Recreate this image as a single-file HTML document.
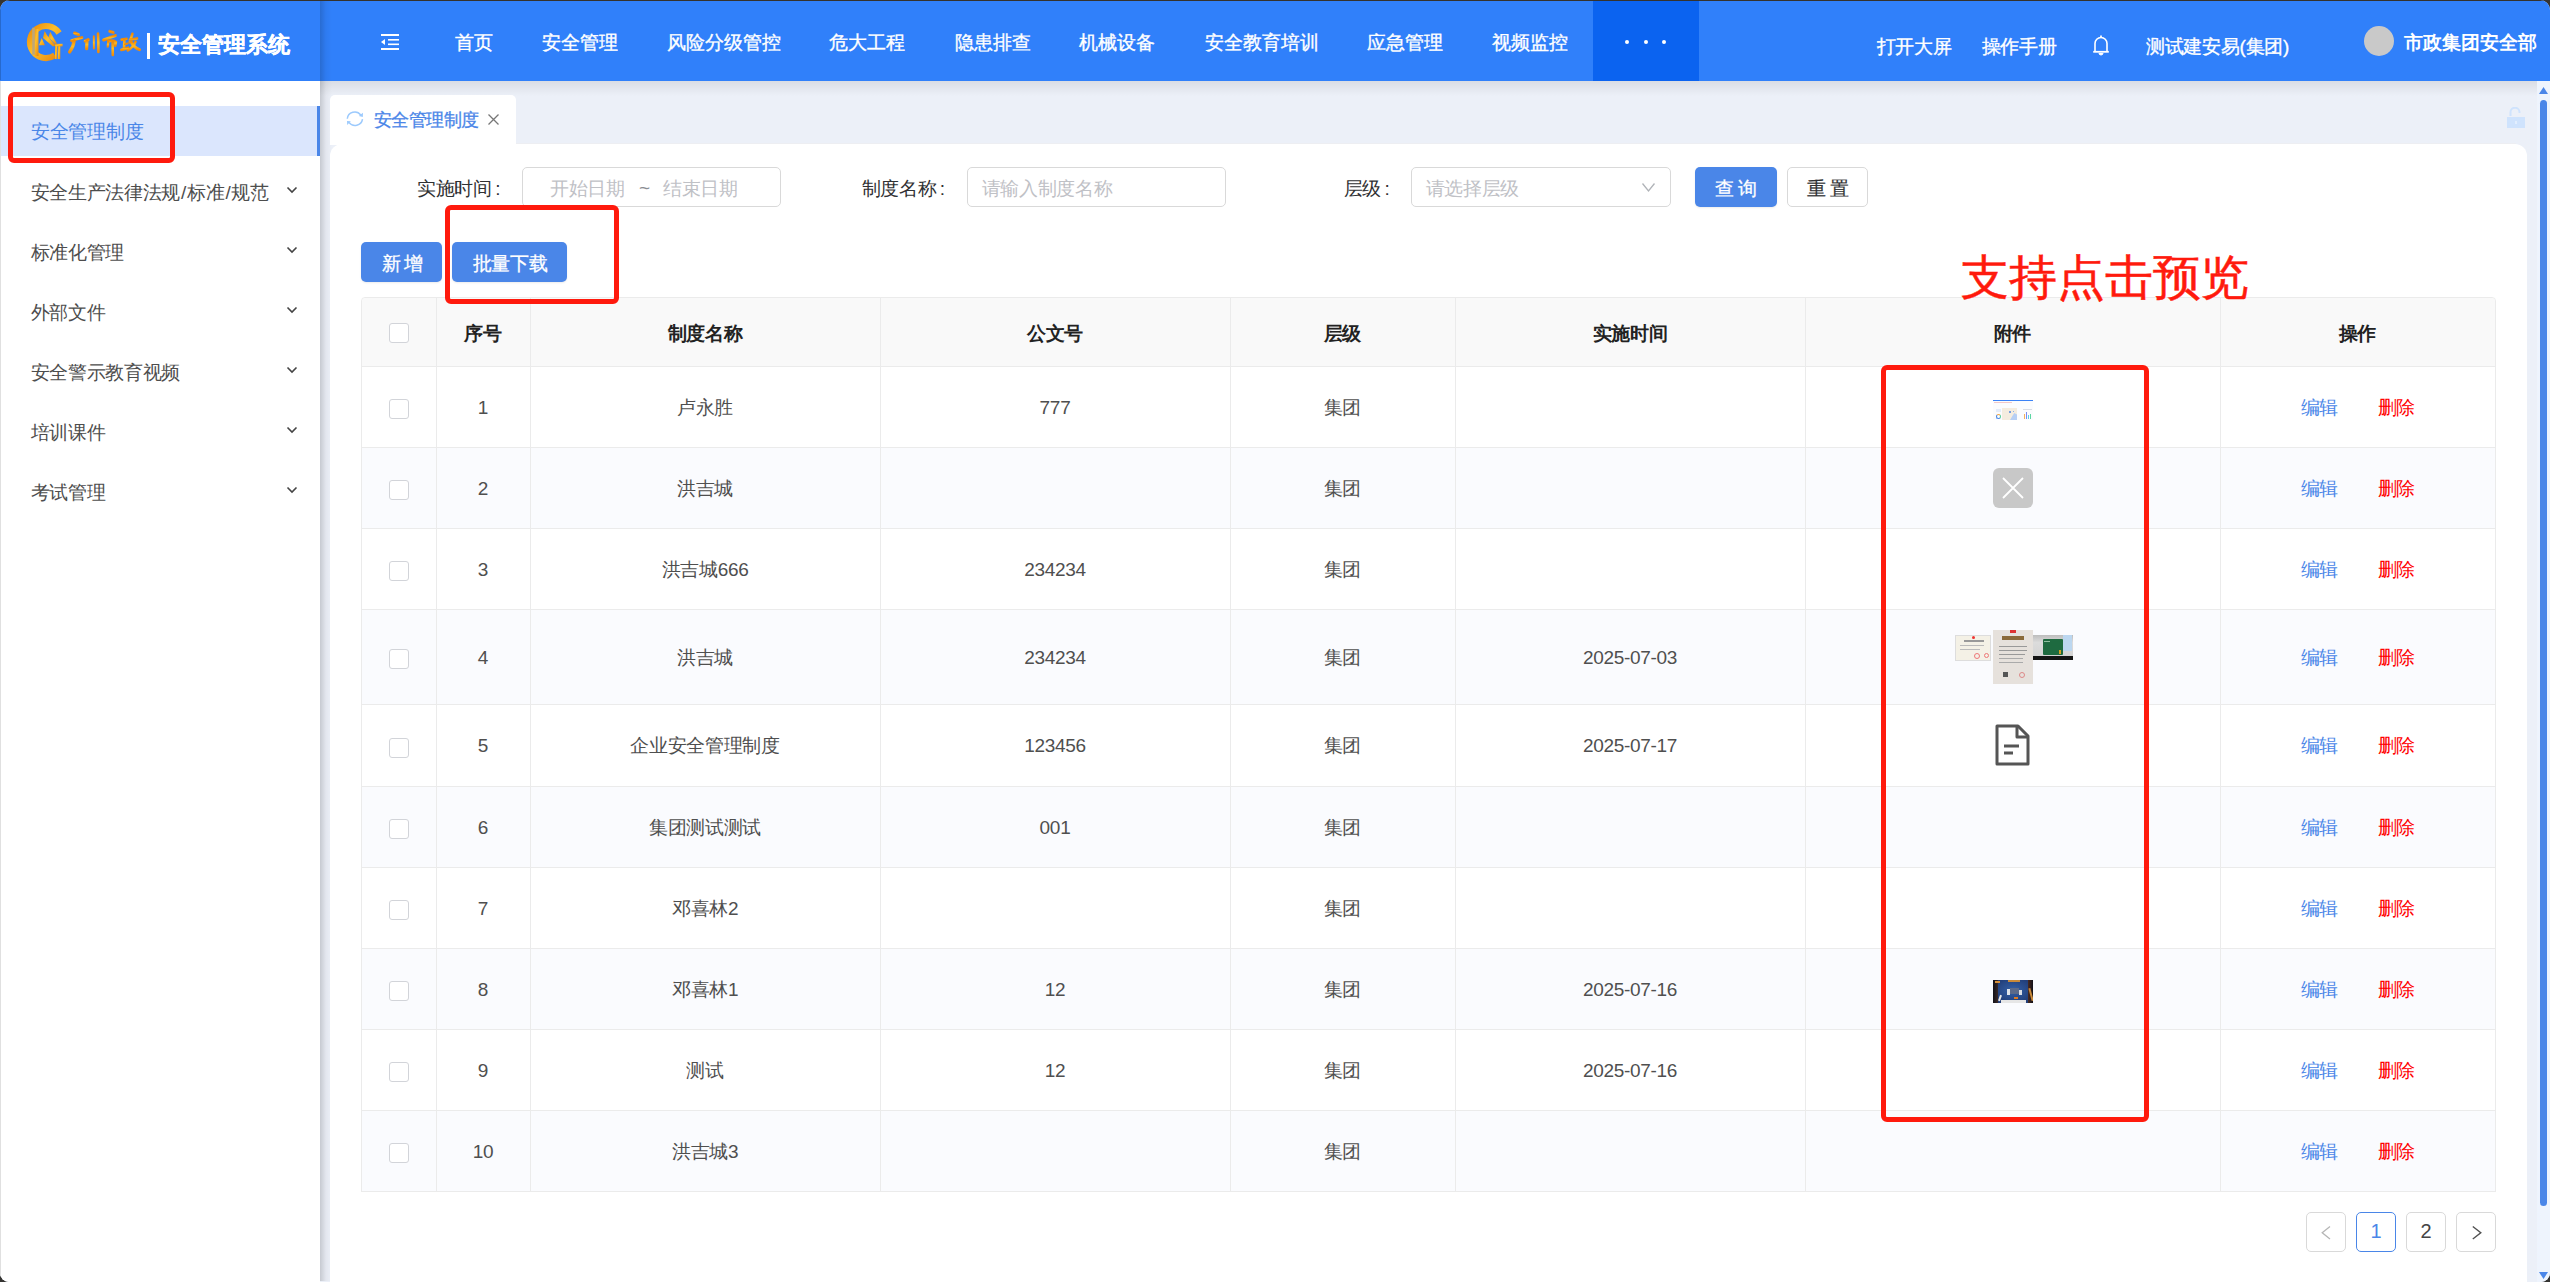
<!DOCTYPE html><html><head><meta charset="utf-8"><style>
*{box-sizing:border-box;margin:0;padding:0}
html,body{width:2550px;height:1282px;overflow:hidden;background:#353432;font-family:"Liberation Sans",sans-serif}
#app{position:absolute;left:0;top:0;width:2550px;height:1282px;border-radius:10px 10px 9px 9px;overflow:hidden;background:#ecf0f8}
.a{position:absolute}
.t{position:absolute;font-size:19px;line-height:28px;white-space:nowrap}
.w{color:#fff}
.hdr{position:absolute;left:0;top:0;width:2550px;height:81px;background:#3080fa}
.side{position:absolute;left:0;top:81px;width:320px;height:1201px;background:#fff}
.inp{position:absolute;top:167px;height:40px;border:1px solid #d9d9d9;border-radius:5px;background:#fff}
.ph{color:#bfc1c6;font-size:19px;letter-spacing:-0.3px}
.btn{position:absolute;height:40px;border-radius:5px;background:#4a86e8;box-shadow:0 1px 2px rgba(0,0,0,.08)}
.redbox{position:absolute;border:5px solid #ff1a0d;border-radius:6px}
.vl{position:absolute;top:297px;width:1px;height:894px;background:#ebebeb}
.hl{position:absolute;left:361px;width:2135px;height:1px;background:#ebebeb}
.cb{position:absolute;left:389px;width:20px;height:20px;border:1px solid #d2d4d9;border-radius:3px;background:#fff}
.c{text-align:center;color:#4f4f4f;font-size:19px;letter-spacing:-0.3px}
.pg{position:absolute;top:1212px;width:40px;height:40px;border:1px solid #d9d9d9;border-radius:5px;background:#fff}
</style></head><body><div id="app">
<div class="hdr">
<svg class="a" style="left:24px;top:18px" width="50" height="48" viewBox="0 0 50 48">
<defs><linearGradient id="gd" x1="0" y1="0" x2="1" y2="1"><stop offset="0" stop-color="#e98a0c"/><stop offset=".45" stop-color="#fdbf2a"/><stop offset="1" stop-color="#e9860e"/></linearGradient></defs>
<path d="M35.1 14.9 A16 16 0 1 0 30.9 37.3" fill="none" stroke="url(#gd)" stroke-width="6.2"/>
<rect x="9.5" y="11" width="5" height="27" fill="url(#gd)"/>
<rect x="8.2" y="9.7" width="2.6" height="27" fill="#bda77a"/>
<path d="M15 27.2 L17.6 20 L21 27.2 Z" fill="url(#gd)"/>
<path d="M19 20 L20.6 13 L23.2 17.5 L31.5 27.5 L29 28.5 Z" fill="url(#gd)"/>
<path d="M24.5 19 L26.2 13.8 L28.8 18.5 L33 25.5 L31 26 Z" fill="url(#gd)"/>
<rect x="31" y="26" width="2.2" height="15" fill="url(#gd)"/>
<rect x="33.8" y="26" width="2.5" height="15" fill="url(#gd)"/>
<rect x="31" y="25.8" width="7.6" height="2.6" fill="url(#gd)"/>
</svg>
<svg class="a" style="left:62px;top:24px" width="84" height="38" viewBox="0 0 84 38">
<defs><linearGradient id="gc" x1="0" y1="0" x2="0" y2="1"><stop offset="0" stop-color="#f18a06"/><stop offset=".5" stop-color="#fdbb22"/><stop offset="1" stop-color="#f08c0a"/></linearGradient></defs>
<g fill="none" stroke="url(#gc)" stroke-linecap="round" stroke-linejoin="round">
<path d="M12.6 9 L16.5 10.6" stroke-width="3"/>
<path d="M9.6 16.6 Q14 15 19.8 13.6" stroke-width="3"/>
<path d="M12.2 16.8 Q11.4 23 7.6 28" stroke-width="3.2"/>
<path d="M23.2 17 L26.2 15.6" stroke-width="3"/>
<path d="M25 16.5 L24.6 24.6" stroke-width="3.2"/>
<path d="M31.8 12.2 L31.9 24.6" stroke-width="2"/>
<path d="M36 9.5 Q36.6 20 36.4 28" stroke-width="2.6"/>
<path d="M47.8 7.4 L51.2 8.4" stroke-width="3"/>
<path d="M41.6 16 Q47 13.8 53.4 11.6" stroke-width="3"/>
<path d="M46.4 17.2 Q51.5 15.8 53.8 18 L53.2 21.5" stroke-width="2.8"/>
<path d="M50.6 18 L50.8 31" stroke-width="2.6"/>
<path d="M46.2 18 L45.8 22.5" stroke-width="2.4"/>
<path d="M59.6 15.6 L64.6 14.8" stroke-width="2.6"/>
<path d="M62.4 15.4 L62 25.2" stroke-width="2.6"/>
<path d="M59.4 25.8 L66 23.8" stroke-width="2.8"/>
<path d="M62.8 20.2 L65.6 19.6" stroke-width="2"/>
<path d="M70.4 9.8 L67.6 18.4" stroke-width="2.6"/>
<path d="M68 15.8 L75 14.4" stroke-width="2.6"/>
<path d="M69.2 18 Q72.4 24 77.6 25.6" stroke-width="3"/>
<path d="M73.6 17.6 Q71.6 23 65.8 26.4" stroke-width="2.6"/>
</g></svg>
<div class="a" style="left:147px;top:33px;width:3px;height:26px;background:#fff"></div>
<div class="t w" style="left:157.5px;top:30.5px;font-size:22px;font-weight:bold;letter-spacing:0.2px;-webkit-text-stroke:0.3px #fff">安全管理系统</div>
<svg class="a" style="left:380px;top:33px" width="20" height="18" viewBox="0 0 20 18">
<rect x="1" y="1" width="18" height="2" fill="#fff"/>
<rect x="8" y="6" width="11" height="1.6" fill="#fff"/>
<rect x="8" y="10.5" width="11" height="1.6" fill="#fff"/>
<rect x="1" y="15" width="18" height="2" fill="#fff"/>
<path d="M5 6 L1 9 L5 12 Z" fill="#fff"/>
</svg>
<div class="t w" style="left:455px;top:28.5px;-webkit-text-stroke:0.35px #fff">首页</div>
<div class="t w" style="left:542px;top:28.5px;-webkit-text-stroke:0.35px #fff">安全管理</div>
<div class="t w" style="left:667px;top:28.5px;-webkit-text-stroke:0.35px #fff">风险分级管控</div>
<div class="t w" style="left:829px;top:28.5px;-webkit-text-stroke:0.35px #fff">危大工程</div>
<div class="t w" style="left:955px;top:28.5px;-webkit-text-stroke:0.35px #fff">隐患排查</div>
<div class="t w" style="left:1079px;top:28.5px;-webkit-text-stroke:0.35px #fff">机械设备</div>
<div class="t w" style="left:1204.5px;top:28.5px;-webkit-text-stroke:0.35px #fff">安全教育培训</div>
<div class="t w" style="left:1367px;top:28.5px;-webkit-text-stroke:0.35px #fff">应急管理</div>
<div class="t w" style="left:1492px;top:28.5px;-webkit-text-stroke:0.35px #fff">视频监控</div>
<div class="a" style="left:1593px;top:0;width:106px;height:81px;background:#0b63f0"></div>
<div class="a" style="left:1624.8px;top:39.6px;width:4.4px;height:4.4px;border-radius:50%;background:#fff"></div>
<div class="a" style="left:1643.8px;top:39.6px;width:4.4px;height:4.4px;border-radius:50%;background:#fff"></div>
<div class="a" style="left:1661.8px;top:39.6px;width:4.4px;height:4.4px;border-radius:50%;background:#fff"></div>
<div class="t w" style="left:1876.5px;top:33px;letter-spacing:-0.3px;-webkit-text-stroke:0.35px #fff">打开大屏</div>
<div class="t w" style="left:1981.5px;top:33px;letter-spacing:-0.3px;-webkit-text-stroke:0.35px #fff">操作手册</div>
<div class="t w" style="left:2146px;top:33px;letter-spacing:-0.3px;-webkit-text-stroke:0.35px #fff">测试建安易(集团)</div>
<svg class="a" style="left:2092px;top:34px" width="18" height="22" viewBox="0 0 18 22">
<path d="M3 17 V9.5 A6 6 0 0 1 15 9.5 V17" fill="none" stroke="#fff" stroke-width="1.6"/>
<path d="M1.2 17.8 H16.8" stroke="#fff" stroke-width="1.8"/>
<path d="M9 1.5 V3.5" stroke="#fff" stroke-width="1.8"/>
<path d="M7 19 A2 2 0 0 0 11 19" fill="#fff" stroke="#fff" stroke-width="1"/>
</svg>
<div class="a" style="left:2364px;top:26px;width:30px;height:30px;border-radius:50%;background:#c9c9c9"></div>
<div class="t w" style="left:2403.5px;top:29px;font-size:18.5px;font-weight:bold">市政集团安全部</div>
<div class="a" style="left:0;top:0;width:1px;height:80px;background:rgba(0,0,0,.18)"></div>
</div>
<div class="side">
<div class="a" style="left:0;top:0;width:1px;height:1201px;background:#e0e0e0"></div>
<div class="a" style="left:1px;top:25px;width:319px;height:50px;background:#dbe6fd"></div>
<div class="a" style="left:317px;top:25px;width:3px;height:50px;background:#4a86e8"></div>
<div class="t" style="left:31px;top:37px;font-size:19px;letter-spacing:-0.3px;color:#4a86e8">安全管理制度</div>
<div class="t" style="left:30.5px;top:97.5px;font-size:19px;letter-spacing:-0.3px;color:#4d4d4d">安全生产法律法规<span style="margin:0 1px">/</span>标准<span style="margin:0 1px">/</span>规范</div>
<svg class="a" style="left:286px;top:105.0px" width="12" height="8" viewBox="0 0 12 8"><path d="M1.5 1.5 L6 6 L10.5 1.5" fill="none" stroke="#444" stroke-width="1.6"/></svg>
<div class="t" style="left:30.5px;top:157.5px;font-size:19px;letter-spacing:-0.3px;color:#4d4d4d">标准化管理</div>
<svg class="a" style="left:286px;top:165.0px" width="12" height="8" viewBox="0 0 12 8"><path d="M1.5 1.5 L6 6 L10.5 1.5" fill="none" stroke="#444" stroke-width="1.6"/></svg>
<div class="t" style="left:30.5px;top:217.5px;font-size:19px;letter-spacing:-0.3px;color:#4d4d4d">外部文件</div>
<svg class="a" style="left:286px;top:225.0px" width="12" height="8" viewBox="0 0 12 8"><path d="M1.5 1.5 L6 6 L10.5 1.5" fill="none" stroke="#444" stroke-width="1.6"/></svg>
<div class="t" style="left:30.5px;top:277.5px;font-size:19px;letter-spacing:-0.3px;color:#4d4d4d">安全警示教育视频</div>
<svg class="a" style="left:286px;top:285.0px" width="12" height="8" viewBox="0 0 12 8"><path d="M1.5 1.5 L6 6 L10.5 1.5" fill="none" stroke="#444" stroke-width="1.6"/></svg>
<div class="t" style="left:30.5px;top:337.5px;font-size:19px;letter-spacing:-0.3px;color:#4d4d4d">培训课件</div>
<svg class="a" style="left:286px;top:345.0px" width="12" height="8" viewBox="0 0 12 8"><path d="M1.5 1.5 L6 6 L10.5 1.5" fill="none" stroke="#444" stroke-width="1.6"/></svg>
<div class="t" style="left:30.5px;top:397.5px;font-size:19px;letter-spacing:-0.3px;color:#4d4d4d">考试管理</div>
<svg class="a" style="left:286px;top:405.0px" width="12" height="8" viewBox="0 0 12 8"><path d="M1.5 1.5 L6 6 L10.5 1.5" fill="none" stroke="#444" stroke-width="1.6"/></svg>
</div>
<div class="a" style="left:320px;top:0;width:12px;height:1281px;background:linear-gradient(to right,rgba(0,0,0,.16),rgba(0,0,0,.04) 50%,rgba(0,0,0,0))"></div>
<div class="a" style="left:320px;top:81px;width:2230px;height:15px;background:linear-gradient(to bottom,rgba(0,0,0,.08),rgba(0,0,0,0))"></div>
<div class="a" style="left:330px;top:95px;width:186px;height:50px;background:#fff;border-radius:5px 5px 0 0"></div>
<svg class="a" style="left:342px;top:106px" width="26" height="26" viewBox="0 0 26 26">
<path d="M5.3 12.8 A7.5 7.5 0 0 1 18.8 9" fill="none" stroke="#9ccafd" stroke-width="1.5"/>
<path d="M21 6.8 L20.8 11 L16.8 10 Z" fill="#9ccafd"/>
<path d="M20.5 13.2 A7.5 7.5 0 0 1 7 16.4" fill="none" stroke="#9ccafd" stroke-width="1.5"/>
<path d="M5 15 L8.8 15.2 L5.2 19 Z" fill="#9ccafd"/>
</svg>
<div class="t" style="left:373.5px;top:106px;font-size:18px;letter-spacing:-0.45px;-webkit-text-stroke:0.3px #4a86e8;color:#4a86e8">安全管理制度</div>
<svg class="a" style="left:487px;top:113px" width="13" height="13" viewBox="0 0 13 13"><path d="M1.5 1.5 L11.5 11.5 M11.5 1.5 L1.5 11.5" stroke="#777" stroke-width="1.3"/></svg>
<svg class="a" style="left:2506px;top:107px" width="20" height="22" viewBox="0 0 20 22">
<path d="M4.5 9 V5.5 A4.5 4.5 0 0 1 13.5 5 V6" fill="none" stroke="#cfe3fd" stroke-width="2"/>
<rect x="1" y="10" width="18" height="11" fill="#cfe3fd"/>
<rect x="9.3" y="14" width="1.4" height="3" fill="#eaf2fe"/>
</svg>
<div class="a" style="left:330px;top:144px;width:2197px;height:1140px;background:#fff;border-radius:12px 12px 0 0"></div>
<div class="a" style="left:516px;top:143px;width:2000px;height:1px;background:#edeef2"></div>
<div class="t" style="left:417px;top:174.5px;font-size:19px;letter-spacing:-0.3px;color:#303133">实施时间<span style="margin-left:3.5px">:</span></div>
<div class="inp" style="left:522px;width:259px"></div>
<div class="t ph" style="left:550px;top:174.5px">开始日期</div>
<div class="t ph" style="left:639px;top:174px;color:#8a8d92">~</div>
<div class="t ph" style="left:663px;top:174.5px">结束日期</div>
<div class="t" style="left:861.5px;top:174.5px;font-size:19px;letter-spacing:-0.3px;color:#303133">制度名称<span style="margin-left:3.5px">:</span></div>
<div class="inp" style="left:967px;width:259px"></div>
<div class="t ph" style="left:981.5px;top:174.5px">请输入制度名称</div>
<div class="t" style="left:1343.5px;top:174.5px;font-size:19px;letter-spacing:-0.3px;color:#303133">层级<span style="margin-left:3.5px">:</span></div>
<div class="inp" style="left:1411px;width:260px"></div>
<div class="t ph" style="left:1425.5px;top:174.5px">请选择层级</div>
<svg class="a" style="left:1641px;top:181px" width="15" height="13" viewBox="0 0 15 13"><path d="M1.5 2.5 L7.5 10 L13.5 2.5" fill="none" stroke="#b0b3b8" stroke-width="1.3"/></svg>
<div class="btn" style="left:1695px;top:167px;width:82px"></div>
<div class="t w" style="left:1715px;top:174.5px;letter-spacing:3.5px;-webkit-text-stroke:0.3px #fff">查询</div>
<div class="a" style="left:1787px;top:167px;width:81px;height:40px;border:1px solid #d9d9d9;border-radius:5px;background:#fff"></div>
<div class="t" style="left:1807px;top:174.5px;letter-spacing:3.5px;color:#303133;-webkit-text-stroke:0.2px #303133">重置</div>
<div class="btn" style="left:361px;top:242px;width:81px"></div>
<div class="t w" style="left:381.5px;top:249.5px;letter-spacing:3.5px;-webkit-text-stroke:0.3px #fff">新增</div>
<div class="btn" style="left:452px;top:242px;width:115px"></div>
<div class="t w" style="left:472.5px;top:249.5px;letter-spacing:-0.3px;-webkit-text-stroke:0.3px #fff">批量下载</div>
<div class="a" style="left:361px;top:297px;width:2135px;height:895px;border:1px solid #ebebeb;border-radius:4px 4px 0 0;overflow:hidden;background:#fff"></div>
<div class="a" style="left:362px;top:298px;width:2133px;height:68px;background:#f9f9f9;border-radius:4px 4px 0 0"></div>
<div class="a" style="left:362px;top:448px;width:2133px;height:80px;background:#fafbfe"></div>
<div class="a" style="left:362px;top:610px;width:2133px;height:94px;background:#fafbfe"></div>
<div class="a" style="left:362px;top:787px;width:2133px;height:80px;background:#fafbfe"></div>
<div class="a" style="left:362px;top:949px;width:2133px;height:80px;background:#fafbfe"></div>
<div class="a" style="left:362px;top:1111px;width:2133px;height:80px;background:#fafbfe"></div>
<div class="hl" style="top:366px"></div>
<div class="hl" style="top:447px"></div>
<div class="hl" style="top:528px"></div>
<div class="hl" style="top:609px"></div>
<div class="hl" style="top:704px"></div>
<div class="hl" style="top:786px"></div>
<div class="hl" style="top:867px"></div>
<div class="hl" style="top:948px"></div>
<div class="hl" style="top:1029px"></div>
<div class="hl" style="top:1110px"></div>
<div class="hl" style="top:1191px"></div>
<div class="vl" style="left:436px"></div>
<div class="vl" style="left:530px"></div>
<div class="vl" style="left:880px"></div>
<div class="vl" style="left:1230px"></div>
<div class="vl" style="left:1455px"></div>
<div class="vl" style="left:1805px"></div>
<div class="vl" style="left:2220px"></div>
<div class="t" style="left:436px;width:94px;top:319.5px;text-align:center;font-weight:bold;font-size:19px;letter-spacing:-0.3px;color:#222">序号</div>
<div class="t" style="left:530px;width:350px;top:319.5px;text-align:center;font-weight:bold;font-size:19px;letter-spacing:-0.3px;color:#222">制度名称</div>
<div class="t" style="left:880px;width:350px;top:319.5px;text-align:center;font-weight:bold;font-size:19px;letter-spacing:-0.3px;color:#222">公文号</div>
<div class="t" style="left:1230px;width:225px;top:319.5px;text-align:center;font-weight:bold;font-size:19px;letter-spacing:-0.3px;color:#222">层级</div>
<div class="t" style="left:1455px;width:350px;top:319.5px;text-align:center;font-weight:bold;font-size:19px;letter-spacing:-0.3px;color:#222">实施时间</div>
<div class="t" style="left:1805px;width:415px;top:319.5px;text-align:center;font-weight:bold;font-size:19px;letter-spacing:-0.3px;color:#222">附件</div>
<div class="t" style="left:2220px;width:275px;top:319.5px;text-align:center;font-weight:bold;font-size:19px;letter-spacing:-0.3px;color:#222">操作</div>
<div class="cb" style="top:323px"></div>
<div class="cb" style="top:399.0px"></div>
<div class="t c" style="left:436px;width:94px;top:393.5px">1</div>
<div class="t c" style="left:530px;width:350px;top:393.5px">卢永胜</div>
<div class="t c" style="left:880px;width:350px;top:393.5px">777</div>
<div class="t c" style="left:1230px;width:225px;top:393.5px">集团</div>
<div class="t" style="left:2300.5px;top:393.5px;color:#4a86e8;letter-spacing:-0.3px">编辑</div>
<div class="t" style="left:2377.5px;top:393.5px;color:#ff0000;letter-spacing:-0.3px">删除</div>
<div class="cb" style="top:480.0px"></div>
<div class="t c" style="left:436px;width:94px;top:474.5px">2</div>
<div class="t c" style="left:530px;width:350px;top:474.5px">洪吉城</div>
<div class="t c" style="left:1230px;width:225px;top:474.5px">集团</div>
<div class="t" style="left:2300.5px;top:474.5px;color:#4a86e8;letter-spacing:-0.3px">编辑</div>
<div class="t" style="left:2377.5px;top:474.5px;color:#ff0000;letter-spacing:-0.3px">删除</div>
<div class="cb" style="top:561.0px"></div>
<div class="t c" style="left:436px;width:94px;top:555.5px">3</div>
<div class="t c" style="left:530px;width:350px;top:555.5px">洪吉城666</div>
<div class="t c" style="left:880px;width:350px;top:555.5px">234234</div>
<div class="t c" style="left:1230px;width:225px;top:555.5px">集团</div>
<div class="t" style="left:2300.5px;top:555.5px;color:#4a86e8;letter-spacing:-0.3px">编辑</div>
<div class="t" style="left:2377.5px;top:555.5px;color:#ff0000;letter-spacing:-0.3px">删除</div>
<div class="cb" style="top:649.0px"></div>
<div class="t c" style="left:436px;width:94px;top:643.5px">4</div>
<div class="t c" style="left:530px;width:350px;top:643.5px">洪吉城</div>
<div class="t c" style="left:880px;width:350px;top:643.5px">234234</div>
<div class="t c" style="left:1230px;width:225px;top:643.5px">集团</div>
<div class="t c" style="left:1455px;width:350px;top:643.5px">2025-07-03</div>
<div class="t" style="left:2300.5px;top:643.5px;color:#4a86e8;letter-spacing:-0.3px">编辑</div>
<div class="t" style="left:2377.5px;top:643.5px;color:#ff0000;letter-spacing:-0.3px">删除</div>
<div class="cb" style="top:737.5px"></div>
<div class="t c" style="left:436px;width:94px;top:732.0px">5</div>
<div class="t c" style="left:530px;width:350px;top:732.0px">企业安全管理制度</div>
<div class="t c" style="left:880px;width:350px;top:732.0px">123456</div>
<div class="t c" style="left:1230px;width:225px;top:732.0px">集团</div>
<div class="t c" style="left:1455px;width:350px;top:732.0px">2025-07-17</div>
<div class="t" style="left:2300.5px;top:732.0px;color:#4a86e8;letter-spacing:-0.3px">编辑</div>
<div class="t" style="left:2377.5px;top:732.0px;color:#ff0000;letter-spacing:-0.3px">删除</div>
<div class="cb" style="top:819.0px"></div>
<div class="t c" style="left:436px;width:94px;top:813.5px">6</div>
<div class="t c" style="left:530px;width:350px;top:813.5px">集团测试测试</div>
<div class="t c" style="left:880px;width:350px;top:813.5px">001</div>
<div class="t c" style="left:1230px;width:225px;top:813.5px">集团</div>
<div class="t" style="left:2300.5px;top:813.5px;color:#4a86e8;letter-spacing:-0.3px">编辑</div>
<div class="t" style="left:2377.5px;top:813.5px;color:#ff0000;letter-spacing:-0.3px">删除</div>
<div class="cb" style="top:900.0px"></div>
<div class="t c" style="left:436px;width:94px;top:894.5px">7</div>
<div class="t c" style="left:530px;width:350px;top:894.5px">邓喜林2</div>
<div class="t c" style="left:1230px;width:225px;top:894.5px">集团</div>
<div class="t" style="left:2300.5px;top:894.5px;color:#4a86e8;letter-spacing:-0.3px">编辑</div>
<div class="t" style="left:2377.5px;top:894.5px;color:#ff0000;letter-spacing:-0.3px">删除</div>
<div class="cb" style="top:981.0px"></div>
<div class="t c" style="left:436px;width:94px;top:975.5px">8</div>
<div class="t c" style="left:530px;width:350px;top:975.5px">邓喜林1</div>
<div class="t c" style="left:880px;width:350px;top:975.5px">12</div>
<div class="t c" style="left:1230px;width:225px;top:975.5px">集团</div>
<div class="t c" style="left:1455px;width:350px;top:975.5px">2025-07-16</div>
<div class="t" style="left:2300.5px;top:975.5px;color:#4a86e8;letter-spacing:-0.3px">编辑</div>
<div class="t" style="left:2377.5px;top:975.5px;color:#ff0000;letter-spacing:-0.3px">删除</div>
<div class="cb" style="top:1062.0px"></div>
<div class="t c" style="left:436px;width:94px;top:1056.5px">9</div>
<div class="t c" style="left:530px;width:350px;top:1056.5px">测试</div>
<div class="t c" style="left:880px;width:350px;top:1056.5px">12</div>
<div class="t c" style="left:1230px;width:225px;top:1056.5px">集团</div>
<div class="t c" style="left:1455px;width:350px;top:1056.5px">2025-07-16</div>
<div class="t" style="left:2300.5px;top:1056.5px;color:#4a86e8;letter-spacing:-0.3px">编辑</div>
<div class="t" style="left:2377.5px;top:1056.5px;color:#ff0000;letter-spacing:-0.3px">删除</div>
<div class="cb" style="top:1143.0px"></div>
<div class="t c" style="left:436px;width:94px;top:1137.5px">10</div>
<div class="t c" style="left:530px;width:350px;top:1137.5px">洪吉城3</div>
<div class="t c" style="left:1230px;width:225px;top:1137.5px">集团</div>
<div class="t" style="left:2300.5px;top:1137.5px;color:#4a86e8;letter-spacing:-0.3px">编辑</div>
<div class="t" style="left:2377.5px;top:1137.5px;color:#ff0000;letter-spacing:-0.3px">删除</div>
<div class="a" style="left:1993px;top:400px;width:40px;height:20px;background:#fbfcfe;overflow:hidden">
<div class="a" style="left:0;top:0;width:40px;height:1.3px;background:#3b82f6"></div>
<div class="a" style="left:1px;top:2.2px;width:18px;height:0.6px;background:#f3c9c9"></div>
<div class="a" style="left:9px;top:7.5px;width:15px;height:12px;background:#f4ecdf"></div>
<div class="a" style="left:17px;top:13px;width:7px;height:7px;background:#b7cff4;clip-path:polygon(0 100%,60% 0,100% 20%,100% 100%)"></div>
<div class="a" style="left:15.5px;top:10.5px;width:2.2px;height:2.2px;background:#4f86e0;border-radius:50%"></div>
<div class="a" style="left:19.5px;top:10.5px;width:1.8px;height:1.8px;background:#6b9be6;border-radius:50%"></div>
<div class="a" style="left:3px;top:14px;width:5px;height:5px;border:1.3px solid #4a86e8;border-right-color:#5ccf9a;border-top-color:#f5a540;border-radius:50%"></div>
<div class="a" style="left:3px;top:9px;width:5px;height:3px;background:#e4ecfa"></div>
<div class="a" style="left:30.5px;top:14px;width:1.2px;height:5px;background:#f5b05a"></div>
<div class="a" style="left:32.5px;top:12px;width:1.2px;height:7px;background:#7b8cf0"></div>
<div class="a" style="left:34.5px;top:15px;width:1.2px;height:4px;background:#5bd0e8"></div>
<div class="a" style="left:36.5px;top:13.5px;width:1.2px;height:5.5px;background:#5cd6a0"></div>
<div class="a" style="left:30px;top:8.5px;width:9px;height:0.8px;background:#d9dde6"></div>
</div>
<div class="a" style="left:1993px;top:468px;width:40px;height:40px;background:#c8c8c8;border-radius:6px">
<svg class="a" style="left:0;top:0" width="40" height="40" viewBox="0 0 40 40"><path d="M10 10 L30 30 M30 10 L10 30" stroke="#fff" stroke-width="1.8"/></svg></div>
<div class="a" style="left:1955px;top:635px;width:36px;height:26px;background:#f4f1e6;border:1px solid #ddd">
<div class="a" style="left:16px;top:0px;width:3px;height:3px;background:#e33;border-radius:50%"></div>
<div class="a" style="left:8px;top:4px;width:20px;height:2px;background:#999"></div>
<div class="a" style="left:4px;top:9px;width:24px;height:1px;background:#bbb"></div>
<div class="a" style="left:4px;top:13px;width:20px;height:1px;background:#bbb"></div>
<div class="a" style="left:18px;top:17px;width:6px;height:6px;border:1px solid #e77;border-radius:50%"></div>
<div class="a" style="left:28px;top:17px;width:5px;height:5px;border:1px solid #e77;border-radius:50%"></div>
</div>
<div class="a" style="left:1993px;top:630px;width:40px;height:54px;background:#e6e1dc">
<div class="a" style="left:17px;top:0;width:6px;height:3px;background:#d33"></div>
<div class="a" style="left:9px;top:6px;width:22px;height:4px;background:#8a6a3a"></div>
<div class="a" style="left:6px;top:16px;width:28px;height:1px;background:#999"></div>
<div class="a" style="left:6px;top:20px;width:28px;height:1px;background:#999"></div>
<div class="a" style="left:6px;top:24px;width:26px;height:1px;background:#999"></div>
<div class="a" style="left:6px;top:28px;width:24px;height:1px;background:#aaa"></div>
<div class="a" style="left:6px;top:32px;width:24px;height:1px;background:#aaa"></div>
<div class="a" style="left:10px;top:42px;width:5px;height:5px;background:#555"></div>
<div class="a" style="left:26px;top:42px;width:6px;height:6px;border:1px solid #d88;border-radius:50%"></div>
</div>
<div class="a" style="left:2033px;top:635px;width:40px;height:25px;background:linear-gradient(#bdbdbd,#dcdcdc 30%,#d2d2d2);overflow:hidden">
<div class="a" style="left:9.5px;top:4px;width:20px;height:16px;background:#1e6a40;border-radius:1px"></div>
<div class="a" style="left:11px;top:6px;width:6px;height:1px;background:#8fc0a0"></div>
<div class="a" style="left:26px;top:15px;width:2px;height:4px;background:#d4a020"></div>
<div class="a" style="left:30px;top:0;width:9px;height:16px;background:#bcd7f0"></div>
<div class="a" style="left:0;top:21px;width:40px;height:4px;background:#151515"></div>
</div>
<svg class="a" style="left:1995px;top:724px" width="36" height="42" viewBox="0 0 36 42">
<path d="M2 2 H23 L33 12 V40 H2 Z" fill="none" stroke="#555" stroke-width="3" stroke-linejoin="round"/>
<path d="M22 2 V13 H33" fill="none" stroke="#555" stroke-width="3" stroke-linejoin="round"/>
<path d="M9 22 H24 M9 29 H18" stroke="#555" stroke-width="3"/>
</svg>
<div class="a" style="left:1993px;top:980px;width:40px;height:23px;background:radial-gradient(ellipse at 50% 45%,#3461a8,#223f7a 70%);overflow:hidden">
<div class="a" style="left:0;top:0;width:5px;height:23px;background:linear-gradient(to right,#101018,#3a2a28)"></div>
<div class="a" style="left:35px;top:0;width:5px;height:23px;background:linear-gradient(to left,#101018,#4a2a20)"></div>
<div class="a" style="left:15px;top:0;width:12px;height:2px;background:#c98a3a"></div>
<div class="a" style="left:2px;top:1px;width:5px;height:2px;background:#d8923a"></div>
<div class="a" style="left:37px;top:8px;width:2px;height:13px;background:#c98a3a;transform:rotate(-15deg)"></div>
<div class="a" style="left:17px;top:8px;width:9px;height:6px;background:#5b6a8a"></div>
<div class="a" style="left:14px;top:9px;width:3px;height:6px;background:#e0e4ea"></div>
<div class="a" style="left:26px;top:10px;width:3px;height:5px;background:#d8dce4"></div>
<div class="a" style="left:8px;top:20px;width:25px;height:3px;background:#e6e6e6"></div>
<div class="a" style="left:6px;top:15px;width:2px;height:6px;background:#e9e9e9;transform:rotate(20deg)"></div>
<div class="a" style="left:21px;top:17px;width:4px;height:2px;background:#e07a20"></div>
</div>
<div class="pg" style="left:2306px"><svg class="a" style="left:13px;top:12px" width="14" height="16" viewBox="0 0 14 16"><path d="M10 1.5 L2.2 7.7 L10 14" fill="none" stroke="#b5b5b5" stroke-width="1.3"/></svg></div>
<div class="pg" style="left:2356px;border-color:#4a86e8"></div>
<div class="t" style="left:2356px;width:40px;top:1217px;text-align:center;color:#4a86e8;font-size:20px">1</div>
<div class="pg" style="left:2406px"></div>
<div class="t" style="left:2406px;width:40px;top:1217px;text-align:center;color:#444;font-size:20px">2</div>
<div class="pg" style="left:2456px"><svg class="a" style="left:12px;top:12px" width="14" height="16" viewBox="0 0 14 16"><path d="M3.8 1.5 L11.8 7.7 L3.8 14" fill="none" stroke="#505050" stroke-width="1.4"/></svg></div>
<div class="a" style="left:2537px;top:81px;width:13px;height:1201px;background:#eef4fd"></div>
<svg class="a" style="left:2538px;top:86px" width="11" height="9" viewBox="0 0 11 9"><path d="M5.5 1 L10 8 L1 8 Z" fill="#4a86e8"/></svg>
<div class="a" style="left:2540px;top:100px;width:7px;height:1106px;border-radius:4px;background:#4a86e8"></div>
<svg class="a" style="left:2538px;top:1271px" width="11" height="9" viewBox="0 0 11 9"><path d="M1 1 L10 1 L5.5 8 Z" fill="#4a86e8"/></svg>
<div class="redbox" style="left:8px;top:92px;width:167px;height:71px"></div>
<div class="redbox" style="left:445px;top:205px;width:174px;height:99px"></div>
<div class="redbox" style="left:1881px;top:365px;width:268px;height:757px"></div>
<div class="t" style="left:1961px;top:247.5px;font-size:48px;line-height:60px;color:#ff1a0d;-webkit-text-stroke:0.5px #ff1a0d">支持点击预览</div>
<div class="a" style="left:0;top:0;width:2550px;height:1px;background:#35322c"></div>
</div></body></html>
